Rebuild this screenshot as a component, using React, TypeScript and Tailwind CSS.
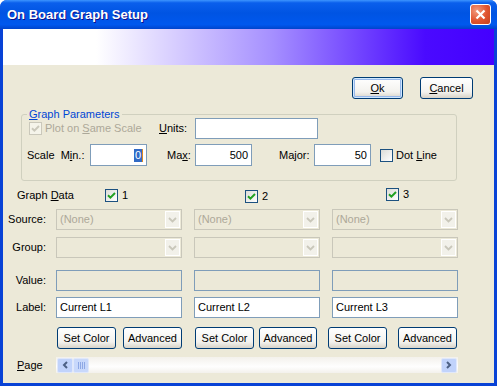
import React from "react";

const font = "font-['Liberation_Sans',Arial,sans-serif]";

// Checkbox im XP-Stil
const Check = ({ checked, disabled }: { checked?: boolean; disabled?: boolean }) => (
  <span
    className={`flex h-[13px] w-[13px] shrink-0 items-center justify-center border ${
      disabled
        ? "border-[#cac8bb] bg-[#f5f4ea]"
        : "border-[#1c5180] bg-[linear-gradient(135deg,#dcdcd7,#ffffff)]"
    }`}
  >
    {checked && (
      <svg width="9" height="9" viewBox="0 0 9 9">
        <path
          d="M1 4.2 L3.4 6.6 L8 2"
          fill="none"
          stroke={disabled ? "#cac8bb" : "#21a121"}
          strokeWidth="2"
        />
      </svg>
    )}
  </span>
);

const U = ({ children }: { children: React.ReactNode }) => <span className="underline">{children}</span>;

const XpButton = ({
  children,
  className = "",
  isDefault,
}: {
  children: React.ReactNode;
  className?: string;
  isDefault?: boolean;
}) => (
  <button
    className={`flex h-[22px] items-center justify-center rounded-[3px] border border-[#003c74] bg-[linear-gradient(to_bottom,#ffffff,#f3f2ee_70%,#d8d3c8)] text-[11px] text-black ${
      isDefault ? "shadow-[inset_0_0_0_1px_#cee7ff,inset_0_0_0_2px_#98b8ea]" : ""
    } ${className}`}
  >
    {children}
  </button>
);

const Combo = ({ text }: { text?: string }) => (
  <div className="flex h-[21px] w-[126px] items-center border border-[#c9c7ba] bg-[#ece9d8] p-[1px]">
    <span className="flex-1 pl-[2px] text-[11px] text-[#aca899]">{text}</span>
    <span className="flex h-full w-[15px] items-center justify-center border border-white bg-[#f2f1ea]">
      <svg width="9" height="6" viewBox="0 0 9 6">
        <path d="M1 1 L4.5 4.5 L8 1" fill="none" stroke="#c9c7ba" strokeWidth="1.8" />
      </svg>
    </span>
  </div>
);

const TextBox = ({ value, disabled, className = "" }: { value?: string; disabled?: boolean; className?: string }) => (
  <div
    className={`flex h-[21px] items-center border border-[#7f9db9] px-[3px] text-[11px] text-black ${
      disabled ? "bg-[#ece9d8]" : "bg-white"
    } ${className}`}
  >
    {value}
  </div>
);

const RowLabel = ({ children }: { children: React.ReactNode }) => (
  <div className="pr-[10px] text-right text-[11px] text-black">{children}</div>
);

const cols = [1, 2, 3];

export default function App() {
  return (
    <div className={`${font} flex h-[386px] w-[497px] flex-col overflow-hidden rounded-t-[7px] bg-[#0842d6]`}>
      {/* Titelleiste */}
      <div className="flex h-[29px] shrink-0 items-center bg-[linear-gradient(to_bottom,#3d95ff_0%,#0a5fec_10%,#0054e3_45%,#0058ee_85%,#0044cc_100%)] pl-[7px] pr-[6px]">
        <span className="flex-1 text-[13px] font-bold text-white [text-shadow:1px_1px_0_#0f1089]">
          On Board Graph Setup
        </span>
        <span className="flex h-[21px] w-[21px] items-center justify-center rounded-[3px] border border-white bg-[radial-gradient(circle_at_30%_30%,#f29b7f,#e0532e_55%,#c4401e)]">
          <svg width="11" height="11" viewBox="0 0 11 11">
            <path d="M1.5 1.5 L9.5 9.5 M9.5 1.5 L1.5 9.5" stroke="white" strokeWidth="2.2" />
          </svg>
        </span>
      </div>

      <div className="mx-[3px] mb-[3px] flex flex-1 flex-col bg-[#ece9d8] text-[11px] text-black">
        {/* Farbverlauf */}
        <div className="h-[36px] bg-[linear-gradient(to_right,#ffffff_19%,#a58fff_55%,#4a0aff_86%,#4400ff)]" />

        {/* Ok / Cancel */}
        <div className="mt-[12px] flex justify-end gap-[17px] pr-[21px]">
          <XpButton isDefault className="w-[51px]">
            <U>O</U>k
          </XpButton>
          <XpButton className="w-[53px]">
            <U>C</U>ancel
          </XpButton>
        </div>

        {/* Graph Parameters */}
        <div className="relative ml-[18px] mt-[15px] h-[67px] w-[436px] rounded-[3px] border border-[#d0d0bf] pt-[3px]">
          <span className="absolute left-[5px] top-[-7px] bg-[#ece9d8] px-[2px] leading-[13px] text-[#0046d5]">
            <U>G</U>raph Parameters
          </span>
          <div className="flex h-[21px] items-center">
            <div className="ml-[7px] flex w-[130px] items-center gap-[3px] text-[#aca899]">
              <Check checked disabled />
              <span>
                Plot on <U>S</U>ame Scale
              </span>
            </div>
            <span className="w-[36px]">
              <U>U</U>nits:
            </span>
            <TextBox className="w-[123px]" />
          </div>
          <div className="mt-[5px] flex h-[22px] items-center">
            <span className="ml-[5px] w-[63px] whitespace-pre">
              Scale  M<U>i</U>n.:
            </span>
            <div className="flex h-[22px] w-[57px] items-center justify-end border border-[#7f9db9] bg-white px-[3px]">
              <span className="border-r border-[#e08a1e] bg-[#316ac5] px-[1px] leading-[13px] text-white">0</span>
            </div>
            <span className="ml-[20px] w-[28px]">
              Ma<U>x</U>:
            </span>
            <TextBox value="500" className="h-[22px] w-[57px] justify-end" />
            <span className="ml-[27px] w-[35px]">Major:</span>
            <TextBox value="50" className="h-[22px] w-[57px] justify-end" />
            <div className="ml-[9px] flex items-center gap-[3px]">
              <Check />
              <span>
                Dot <U>L</U>ine
              </span>
            </div>
          </div>
        </div>

        {/* Graph Data */}
        <div className="mt-[8px] flex h-[13px] items-center">
          <span className="ml-[14px] w-[88px]">
            Graph <U>D</U>ata
          </span>
          <div className="flex w-[140px] items-center gap-[4px]">
            <Check checked />
            <span>1</span>
          </div>
          <div className="mt-[2px] flex w-[141px] items-center gap-[4px]">
            <Check checked />
            <span>2</span>
          </div>
          <div className="mt-[-2px] flex items-center gap-[4px]">
            <Check checked />
            <span>3</span>
          </div>
        </div>

        <div className="mt-[7px] grid grid-cols-[53px_138px_138px_126px] items-center gap-y-[7px]">
          <RowLabel>Source:</RowLabel>
          {cols.map((c) => (
            <Combo key={c} text="(None)" />
          ))}
          <RowLabel>Group:</RowLabel>
          {cols.map((c) => (
            <Combo key={c} />
          ))}
        </div>

        <div className="mt-[12px] grid grid-cols-[53px_138px_138px_126px] items-center gap-y-[6px]">
          <RowLabel>Value:</RowLabel>
          {cols.map((c) => (
            <TextBox key={c} disabled className="h-[20px] w-[126px]" />
          ))}
          <RowLabel>Label:</RowLabel>
          {cols.map((c) => (
            <TextBox key={c} value={`Current L${c}`} className="w-[126px]" />
          ))}
        </div>

        {/* Knöpfe pro Spalte */}
        <div className="mt-[9px] flex h-[22px]">
          <div className="ml-[54px] flex gap-[7px]">
            <XpButton className="w-[59px]">Set Color</XpButton>
            <XpButton className="w-[59px]">Advanced</XpButton>
          </div>
          <div className="ml-[13px] flex gap-[5px]">
            <XpButton className="w-[59px]">Set Color</XpButton>
            <XpButton className="w-[58px]">Advanced</XpButton>
          </div>
          <div className="ml-[11px] flex gap-[11px]">
            <XpButton className="w-[59px]">Set Color</XpButton>
            <XpButton className="w-[59px]">Advanced</XpButton>
          </div>
        </div>

        {/* Page scrollbar */}
        <div className="mt-[8px] flex h-[16px] items-center">
          <span className="ml-[14px] w-[39px]">
            <U>P</U>age
          </span>
          <div className="flex h-[16px] w-[402px] items-center bg-[linear-gradient(to_bottom,#f3f1ec,#fefefe_60%,#f3f1ec)] p-[1px]">
            <span className="flex h-[15px] w-[16px] items-center justify-center rounded-[2px] border border-[#e0e8fb] bg-[#c1d3fb]">
              <svg width="6" height="8" viewBox="0 0 6 8">
                <path d="M5 1 L2 4 L5 7" fill="none" stroke="#4d6185" strokeWidth="2" />
              </svg>
            </span>
            <span className="flex h-[15px] w-[16px] items-center justify-center gap-[1px] rounded-[2px] border border-[#e0e8fb] bg-[#c8d8fb]">
              <span className="h-[7px] w-[1px] bg-[#8ea8e5]" />
              <span className="h-[7px] w-[1px] bg-[#8ea8e5]" />
              <span className="h-[7px] w-[1px] bg-[#8ea8e5]" />
              <span className="h-[7px] w-[1px] bg-[#8ea8e5]" />
            </span>
            <span className="flex-1" />
            <span className="flex h-[15px] w-[16px] items-center justify-center rounded-[2px] border border-[#e0e8fb] bg-[#c1d3fb]">
              <svg width="6" height="8" viewBox="0 0 6 8">
                <path d="M1 1 L4 4 L1 7" fill="none" stroke="#4d6185" strokeWidth="2" />
              </svg>
            </span>
          </div>
        </div>
      </div>
    </div>
  );
}
